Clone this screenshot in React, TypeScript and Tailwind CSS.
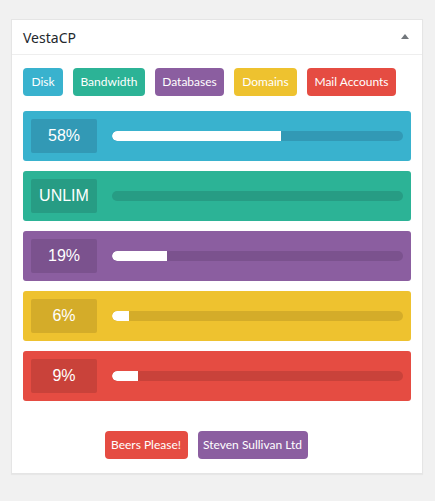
import React from 'react';

const tabs = [
  { name: 'Disk', bg: 'bg-[#39b2ce]', w: 'w-[40px]' },
  { name: 'Bandwidth', bg: 'bg-[#2cb396]', w: 'w-[72px]' },
  { name: 'Databases', bg: 'bg-[#8b5ea0]', w: 'w-[69px]' },
  { name: 'Domains', bg: 'bg-[#eec22f]', w: 'w-[63px]' },
  { name: 'Mail Accounts', bg: 'bg-[#e54c42]', w: 'w-[89px]' },
];

const bars = [
  { label: '58%', pct: 58, bg: 'bg-[#39b2ce]', dark: 'bg-[#3299b5]' },
  { label: 'UNLIM', pct: 0, bg: 'bg-[#2cb396]', dark: 'bg-[#279c84]' },
  { label: '19%', pct: 19, bg: 'bg-[#8b5ea0]', dark: 'bg-[#7b528e]' },
  { label: '6%', pct: 6, bg: 'bg-[#eec22f]', dark: 'bg-[#d4ac29]' },
  { label: '9%', pct: 9, bg: 'bg-[#e54c42]', dark: 'bg-[#c9423a]' },
];

export default function App() {
  return (
    <div className="w-[435px] h-[501px] bg-[#f1f1f1] pt-[19px] px-[11px] font-['Open_Sans',sans-serif]">
      <div className="w-[412px] bg-white border border-[#e5e5e5] shadow-[0_1px_1px_rgba(0,0,0,0.04)]">
        <div className="h-[35px] flex items-center justify-between pl-[11px] pr-[13px] border-b border-[#eeeeee]">
          <h2 className="text-[14px] text-[#23282d] font-['Noto_Sans',sans-serif]">VestaCP</h2>
          <svg width="8" height="5" viewBox="0 0 8 5" className="mb-[1px]">
            <polygon points="4,0 8,5 0,5" fill="#72777c" />
          </svg>
        </div>

        <div className="px-[11px] pt-[13px] pb-[13px]">
          <div className="flex gap-[10px]">
            {tabs.map((t) => (
              <span
                key={t.name}
                className={`${t.bg} ${t.w} h-[28px] rounded-[4px] flex items-center justify-center whitespace-nowrap text-white text-[12px] font-['Lato',sans-serif]`}
              >
                {t.name}
              </span>
            ))}
          </div>

          <div className="flex flex-col gap-[10px] mt-[15px]">
            {bars.map((b) => (
              <div key={b.label} className={`${b.bg} h-[50px] rounded-[3px] p-[8px] flex items-center`}>
                <div
                  className={`${b.dark} w-[66px] h-[34px] rounded-[2px] flex items-center justify-center text-white text-[16px] font-['Liberation_Sans',Arial,sans-serif]`}
                >
                  {b.label}
                </div>
                <div className={`${b.dark} ml-[15px] flex-1 h-[10px] rounded-full overflow-hidden`}>
                  <div className="h-full bg-white rounded-l-full" style={{ width: `${b.pct}%` }} />
                </div>
              </div>
            ))}
          </div>

          <div className="flex justify-center gap-[10px] mt-[30px] mb-[1px] pr-[22px]">
            <span className="bg-[#e54c42] w-[83px] h-[28px] rounded-[4px] flex items-center justify-center whitespace-nowrap text-white text-[12px] font-['Lato',sans-serif]">
              Beers Please!
            </span>
            <span className="bg-[#8b5ea0] w-[110px] h-[28px] rounded-[4px] flex items-center justify-center whitespace-nowrap text-white text-[12px] font-['Lato',sans-serif]">
              Steven Sullivan Ltd
            </span>
          </div>
        </div>
      </div>
    </div>
  );
}
